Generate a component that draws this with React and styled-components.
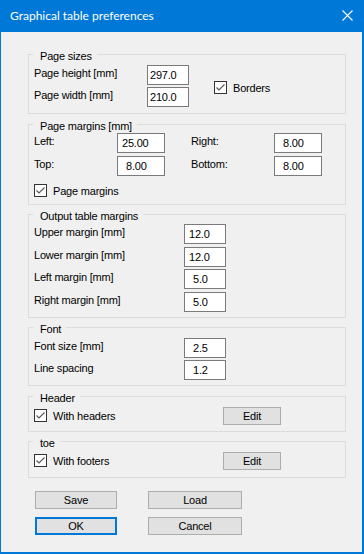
import React from 'react'
import styled, { createGlobalStyle } from 'styled-components'

const GlobalStyle = createGlobalStyle`
  html, body {
    margin: 0;
    padding: 0;
    background: #f0f0f0;
  }
  body {
    font-family: 'Liberation Sans', Arial, sans-serif;
    font-size: 11px;
    color: #000;
  }
`

const Window = styled.div`
  width: 364px;
  height: 554px;
  box-sizing: border-box;
  background: #f0f0f0;
  border-left: 1px solid #0078d7;
  border-right: 2px solid #0078d7;
  border-bottom: 2px solid #0078d7;
  display: flex;
  flex-direction: column;
`

const TitleBar = styled.div`
  height: 31px;
  margin: 0 -2px 0 -1px;
  background: #0078d7;
  color: #fff;
  display: flex;
  align-items: center;
  justify-content: space-between;
  padding: 0 11px 1px 10px;
  font-family: Lato, 'Noto Sans', sans-serif;
  font-size: 12px;
`

const Body = styled.div`
  padding: 15px 16px 0 27px;
  display: flex;
  flex-direction: column;
`

const Group = styled.fieldset`
  margin: ${p => p.$mt || 0}px 0 0 0;
  padding: ${p => p.$pt}px 5px ${p => p.$pb}px 5px;
  border: 1px solid #dcdcdc;
  min-width: 0;
  width: 318px;
  box-sizing: border-box;
`

const Legend = styled.legend`
  font-size: 11px;
  line-height: 12px;
  padding: 3px 5px 0 7px;
  margin-left: -1px;
  letter-spacing: -0.2px;
`

const SizeRow = styled.div`
  display: flex;
  align-items: center;
  gap: 25px;
`

const Grid = styled.div`
  display: grid;
  grid-template-columns: ${p => p.$cols};
  row-gap: ${p => p.$gap}px;
  align-items: ${p => p.$align || 'start'};
`

const Label = styled.div`
  line-height: 13px;
  padding-top: 2px;
  letter-spacing: -0.2px;
  white-space: nowrap;
`

const Field = styled.input`
  box-sizing: border-box;
  width: ${p => p.$w}px;
  height: 20px;
  margin: 0;
  padding: 0 0 0 ${p => p.$pad}px;
  border: 1px solid #7a7a7a;
  background: #fff;
  font-family: 'Liberation Sans', Arial, sans-serif;
  font-size: 11px;
  line-height: 18px;
  color: #000;
  outline: none;
  letter-spacing: -0.2px;
`

const CheckRow = styled.label`
  display: flex;
  align-items: center;
  gap: 6px;
  white-space: nowrap;
  letter-spacing: -0.2px;
  margin-top: ${p => p.$mt || 0}px;
`

const Box = styled.span`
  width: 13px;
  height: 13px;
  box-sizing: border-box;
  border: 1px solid #333;
  background: #fff;
  display: flex;
  align-items: center;
  justify-content: center;
  flex: none;
`

const Button = styled.button`
  box-sizing: border-box;
  width: ${p => p.$w}px;
  height: 18px;
  margin: 0;
  padding: 0;
  background: #e1e1e1;
  border: ${p => (p.$default ? '2px solid #0078d7' : '1px solid #adadad')};
  font-family: 'Liberation Sans', Arial, sans-serif;
  font-size: 11px;
  line-height: 14px;
  color: #000;
  letter-spacing: -0.2px;
`

const Actions = styled.div`
  margin: 13px 0 0 7px;
  display: grid;
  grid-template-columns: 82px 94px;
  column-gap: 31px;
  row-gap: 8px;
`

const Check = ({ children, ...rest }) => (
  <CheckRow {...rest}>
    <Box>
      <svg width='11' height='11' viewBox='0 0 11 11'>
        <polyline points='1.5,5.5 4,8 9.5,2.5' fill='none' stroke='#5a5a5a' strokeWidth='1.2' />
      </svg>
    </Box>
    {children}
  </CheckRow>
)

const Input = ({ value, w = 42, pad = 2 }) => (
  <Field readOnly value={value} $w={w} $pad={pad} />
)

const App = () => {
  return (
    <Window>
      <GlobalStyle />
      <TitleBar>
        <span>Graphical table preferences</span>
        <svg width='11' height='11' viewBox='0 0 11 11'>
          <path d='M0.5 0.5 L10.5 10.5 M10.5 0.5 L0.5 10.5' stroke='#fff' strokeWidth='1.1' />
        </svg>
      </TitleBar>
      <Body>
        <Group $pt={3} $pb={6}>
          <Legend>Page sizes</Legend>
          <SizeRow>
            <Grid $cols='113px 42px' $gap={2}>
              <Label>Page height [mm]</Label>
              <Input value='297.0' />
              <Label>Page width [mm]</Label>
              <Input value='210.0' />
            </Grid>
            <Check $mt={3}>Borders</Check>
          </SizeRow>
        </Group>

        <Group $mt={3} $pt={1} $pb={7}>
          <Legend>Page margins [mm]</Legend>
          <Grid $cols='83px 48px 26px 83px 48px' $gap={3}>
            <Label>Left:</Label>
            <Input value='25.00' w={48} pad={4} />
            <span />
            <Label>Right:</Label>
            <Input value='8.00' w={48} pad={8} />
            <Label>Top:</Label>
            <Input value='8.00' w={48} pad={8} />
            <span />
            <Label>Bottom:</Label>
            <Input value='8.00' w={48} pad={8} />
          </Grid>
          <Check $mt={8}>Page margins</Check>
        </Group>

        <Group $mt={2} $pt={2} $pb={5}>
          <Legend>Output table margins</Legend>
          <Grid $cols='150px 42px' $gap={2.67}>
            <Label>Upper margin [mm]</Label>
            <Input value='12.0' pad={4} />
            <Label>Lower margin [mm]</Label>
            <Input value='12.0' pad={4} />
            <Label>Left margin [mm]</Label>
            <Input value='5.0' pad={8} />
            <Label>Right margin [mm]</Label>
            <Input value='5.0' pad={8} />
          </Grid>
        </Group>

        <Group $mt={2} $pt={3} $pb={5}>
          <Legend>Font</Legend>
          <Grid $cols='150px 42px' $gap={2}>
            <Label>Font size [mm]</Label>
            <Input value='2.5' pad={8} />
            <Label>Line spacing</Label>
            <Input value='1.2' pad={8} />
          </Grid>
        </Group>

        <Group $mt={3} $pt={3} $pb={6}>
          <Legend>Header</Legend>
          <Grid $cols='189px 58px' $gap={0} $align='center'>
            <Check>With headers</Check>
            <Button $w={58}>Edit</Button>
          </Grid>
        </Group>

        <Group $mt={2} $pt={3} $pb={7}>
          <Legend>toe</Legend>
          <Grid $cols='189px 58px' $gap={0} $align='center'>
            <Check>With footers</Check>
            <Button $w={58}>Edit</Button>
          </Grid>
        </Group>

        <Actions>
          <Button $w={82}>Save</Button>
          <Button $w={94}>Load</Button>
          <Button $w={82} $default>OK</Button>
          <Button $w={94}>Cancel</Button>
        </Actions>
      </Body>
    </Window>
  )
}

export default App
